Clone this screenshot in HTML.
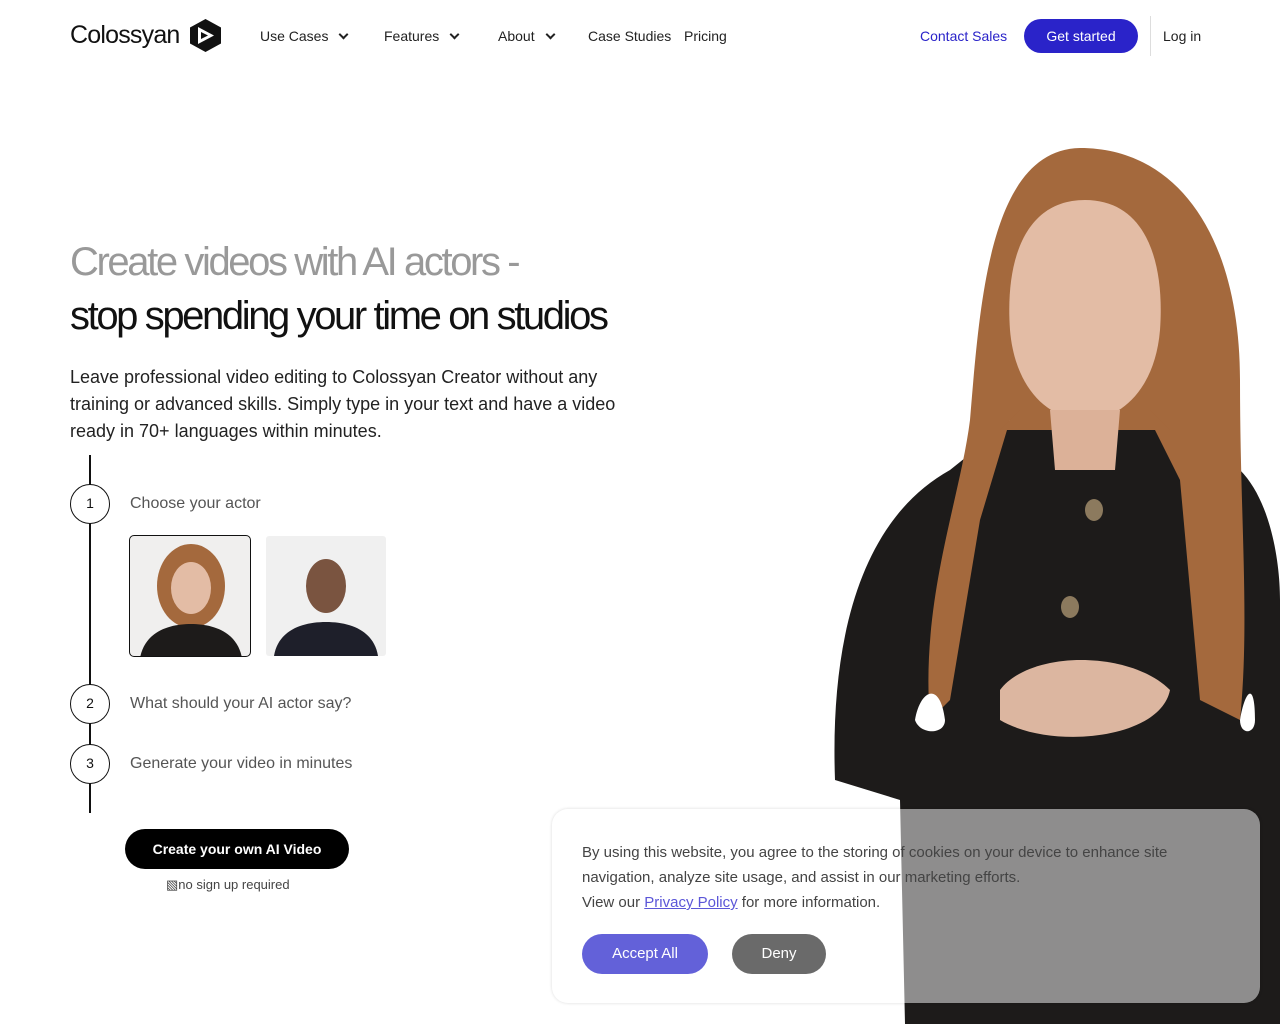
<!DOCTYPE html>
<html><head><meta charset="utf-8"><style>
*{margin:0;padding:0;box-sizing:border-box}
body{width:1280px;height:1024px;overflow:hidden;background:#fff;font-family:"Liberation Sans",sans-serif;color:#111;position:relative}
.nav{position:absolute;top:0;left:0;width:1280px;height:72px}
.nav span{position:absolute;top:28px;font-size:14px;color:#222}
.chev{display:inline-block;width:7px;height:7px;border-right:2px solid #222;border-bottom:2px solid #222;transform:rotate(45deg);margin-left:12px;position:relative;top:-3px}
h1{position:absolute;left:70px;font-weight:400;letter-spacing:-2.4px;font-size:40px;white-space:nowrap}
.step{position:absolute;left:70px;width:40px;height:40px;border:1.5px solid #111;border-radius:50%;text-align:center;line-height:37px;font-size:14px;background:#fff}
.sl{position:absolute;left:130px;font-size:16px;color:#555}
</style></head><body>
<div class="nav">
<span style="left:70px;top:21px;font-size:25px;color:#111;letter-spacing:-0.8px">Colossyan</span>
<svg style="position:absolute;left:190px;top:19px" width="31" height="33" viewBox="0 0 31 33"><polygon points="15.5,0 31,8.5 31,24.5 15.5,33 0,24.5 0,8.5" fill="#111"/><polygon points="8,8 24,16.5 8,25" fill="#fff"/><polygon points="11,13 18,16.5 11,20" fill="#111"/></svg>
<span style="left:260px">Use Cases<i class="chev"></i></span>
<span style="left:384px">Features<i class="chev"></i></span>
<span style="left:498px">About<i class="chev"></i></span>
<span style="left:588px">Case Studies</span>
<span style="left:684px">Pricing</span>
<span style="left:920px;color:#2a23c9">Contact Sales</span>
<div style="position:absolute;left:1024px;top:19px;width:114px;height:34px;border-radius:17px;background:#2a23c9;color:#fff;font-size:14px;text-align:center;line-height:34px">Get started</div>
<div style="position:absolute;left:1150px;top:16px;width:1px;height:40px;background:#ddd"></div>
<span style="left:1163px">Log in</span>
</div>

<svg style="position:absolute;left:820px;top:140px" width="460" height="884" viewBox="820 140 460 884">
<path d="M835 780 C830 640 860 520 950 470 L1000 430 L1170 430 L1240 470 C1270 500 1280 560 1280 600 L1280 1024 L905 1024 L900 800 Z" fill="#1d1b1a"/>
<path d="M1080 148 C1180 148 1240 240 1240 380 C1240 520 1250 620 1240 720 L1200 700 L1180 480 L1150 420 L1010 420 L980 520 L950 700 L930 720 C920 600 960 500 970 420 C980 300 990 150 1080 148Z" fill="#a4693d"/>
<path d="M1000 430 L1170 430 L1150 410 L1020 410Z" fill="#a4693d"/>
<path d="M1085 200 C1145 200 1165 260 1160 330 C1155 390 1120 420 1085 420 C1050 420 1015 390 1010 330 C1005 260 1025 200 1085 200Z" fill="#e3bca5"/>
<path d="M1050 410 L1120 410 L1115 470 L1055 470Z" fill="#dcb198"/>
<path d="M1000 690 C1030 650 1130 650 1170 690 C1160 740 1050 750 1000 720Z" fill="#dcb6a0"/>
<path d="M915 720 C920 690 940 680 945 720 C945 735 920 735 915 720Z M1240 720 C1245 690 1255 680 1255 720 C1255 735 1240 735 1240 720Z" fill="#fff"/>
<ellipse cx="1094" cy="510" rx="9" ry="11" fill="#8c7a5e"/><ellipse cx="1070" cy="607" rx="9" ry="11" fill="#8c7a5e"/>
</svg>

<h1 style="top:240px;color:#999">Create videos with AI actors -</h1>
<h1 style="top:294px;color:#111">stop spending your time on studios</h1>
<p style="position:absolute;left:70px;top:364px;width:580px;font-size:18px;line-height:27px;color:#222">Leave professional video editing to Colossyan Creator without any training or advanced skills. Simply type in your text and have a video ready in 70+ languages within minutes.</p>
<div style="position:absolute;left:89px;top:455px;width:1.5px;height:358px;background:#111"></div>
<div class="step" style="top:484px">1</div><div class="sl" style="top:495px">Choose your actor</div>
<div class="step" style="top:684px">2</div><div class="sl" style="top:695px">What should your AI actor say?</div>
<div class="step" style="top:744px">3</div><div class="sl" style="top:755px">Generate your video in minutes</div>
<div style="position:absolute;left:129px;top:535px;width:122px;height:122px;border:1.5px solid #111;border-radius:5px;background:#f0efee;overflow:hidden">
<svg width="122" height="122"><ellipse cx="61" cy="50" rx="34" ry="42" fill="#a4693d"/><ellipse cx="61" cy="52" rx="20" ry="26" fill="#e3bca5"/><path d="M10 122 C15 95 40 88 61 88 C82 88 107 95 112 122Z" fill="#1d1b1a"/></svg></div>
<div style="position:absolute;left:266px;top:536px;width:120px;height:120px;border-radius:3px;background:#f0f0f0;overflow:hidden">
<svg width="120" height="120"><ellipse cx="60" cy="50" rx="20" ry="27" fill="#7a5440"/><path d="M8 120 C12 95 35 86 60 86 C85 86 108 95 112 120Z" fill="#1e1f2a"/></svg></div>
<div style="position:absolute;left:125px;top:829px;width:224px;height:40px;border-radius:20px;background:#000;color:#fff;font-size:14px;font-weight:bold;text-align:center;line-height:40px">Create your own AI Video</div>
<div style="position:absolute;left:166px;top:877px;font-size:13px;color:#444">▧no sign up required</div>

<div style="position:absolute;left:552px;top:809px;width:708px;height:194px;border-radius:16px;background:rgba(255,255,255,0.5);box-shadow:0 0 3px rgba(0,0,0,0.15)">
<p style="position:absolute;left:30px;top:31px;width:640px;font-size:15px;line-height:25px;color:#444">By using this website, you agree to the storing of cookies on your device to enhance site navigation, analyze site usage, and assist in our marketing efforts.<br>View our <u style="color:#5b56d8">Privacy Policy</u> for more information.</p>
<div style="position:absolute;left:30px;top:125px;width:126px;height:40px;border-radius:20px;background:#6361d9;color:#fff;font-size:15px;text-align:center;line-height:40px">Accept All</div>
<div style="position:absolute;left:180px;top:125px;width:94px;height:40px;border-radius:20px;background:#6a6a6a;color:#fff;font-size:15px;text-align:center;line-height:40px">Deny</div>
</div>
</body></html>
